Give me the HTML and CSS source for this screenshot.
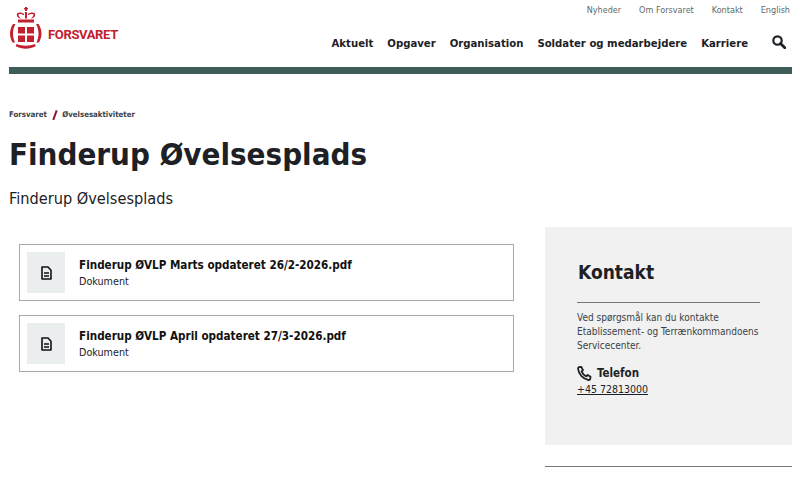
FILE: index.html
```
<!DOCTYPE html>
<html lang="da">
<head>
<meta charset="utf-8">
<title>Finderup Øvelsesplads</title>
<link rel="stylesheet" href="styles.css">
</head>
<body>
<header class="header">
  <div class="header-row">
    <a class="logo" href="#">
      <svg class="logo-mark" width="32" height="42" viewBox="10 7 32 42" aria-hidden="true">
        <g fill="#c1202e">
          <rect x="25" y="7" width="2" height="4"/>
          <rect x="24" y="8" width="4" height="1.300"/>
          <rect x="25" y="12" width="2" height="6.500"/>
          <path d="M20 18.500c-3-1-3.500-3-3-5 2-1.500 5-1 7 .5v1.300c-2-1-4-1.700-5.300-1-.4 1.300.3 2.700 2.300 4.200z"/>
          <path d="M32 18.500c3-1 3.500-3 3-5-2-1.500-5-1-7 .5v1.300c2-1 4-1.700 5.300-1 .4 1.300-.3 2.700-2.300 4.200z"/>
          <rect x="18" y="19.500" width="16" height="3"/>
          <path d="M13 24h2.500c-1.700 3-2.500 6-2.500 9.500s.7 6 2 9h-2.500c-1.600-3-2.500-6-2.500-9s1-6.500 3-9.500z"/>
          <path d="M38.500 24H36c1.700 3 2.500 6 2.500 9.500s-.7 6-2 9H39c1.600-3 2.500-6 2.500-9s-1-6.500-3-9.500z"/>
          <path d="M16.500 44c5.500 2.300 13 2.300 18.500 0l.7 2.300c-6 3.300-14 3.300-20 0z"/>
          <rect x="18" y="27" width="7" height="6.500"/>
          <rect x="27" y="27" width="7" height="6.500"/>
          <rect x="18" y="35.500" width="7" height="6.500"/>
          <rect x="27" y="35.500" width="7" height="6.500"/>
        </g>
      </svg>
      <span class="logo-text">FORSVARET</span>
    </a>
    <div class="nav-col">
      <nav class="top-nav">
        <a href="#">Nyheder</a>
        <a href="#">Om Forsvaret</a>
        <a href="#">Kontakt</a>
        <a href="#">English</a>
      </nav>
      <nav class="main-nav">
        <a href="#">Aktuelt</a>
        <a href="#">Opgaver</a>
        <a href="#">Organisation</a>
        <a href="#">Soldater og medarbejdere</a>
        <a href="#">Karriere</a>
        <svg class="search" width="14" height="14" viewBox="0 0 14 14" aria-hidden="true">
          <circle cx="5.500" cy="5.500" r="4.200" fill="none" stroke="#1d2125" stroke-width="2.200"/>
          <path d="M8.500 8.500l4.300 4.300" stroke="#1d2125" stroke-width="2.800" stroke-linecap="round"/>
        </svg>
      </nav>
    </div>
  </div>
  <div class="bar"></div>
</header>
<main class="main">
  <div class="crumbs"><a href="#">Forsvaret</a><span class="slash"></span><a href="#">Øvelsesaktiviteter</a></div>
  <h1>Finderup Øvelsesplads</h1>
  <p class="lead">Finderup Øvelsesplads</p>
  <div class="columns">
    <section class="docs">
      <a class="doc" href="#">
        <span class="doc-icon">
          <svg width="11" height="14" viewBox="0 0 11 14" aria-hidden="true"><path d="M1 1h6l3 3.200V13H1z" fill="none" stroke="#111" stroke-width="1.600" stroke-linejoin="round"/><path d="M3 7h5M3 10h5" stroke="#111" stroke-width="1.400"/></svg>
        </span>
        <span class="doc-text"><strong>Finderup ØVLP Marts opdateret 26/2-2026.pdf</strong><span>Dokument</span></span>
      </a>
      <a class="doc" href="#">
        <span class="doc-icon">
          <svg width="11" height="14" viewBox="0 0 11 14" aria-hidden="true"><path d="M1 1h6l3 3.200V13H1z" fill="none" stroke="#111" stroke-width="1.600" stroke-linejoin="round"/><path d="M3 7h5M3 10h5" stroke="#111" stroke-width="1.400"/></svg>
        </span>
        <span class="doc-text"><strong>Finderup ØVLP April opdateret 27/3-2026.pdf</strong><span>Dokument</span></span>
      </a>
    </section>
    <aside class="side">
      <div class="contact">
        <h2>Kontakt</h2>
        <p>Ved spørgsmål kan du kontakte Etablissement- og Terrænkommandoens Servicecenter.</p>
        <h3><svg width="15" height="15" viewBox="0 0 15 15" aria-hidden="true"><path d="M2 1.200l2.200-.4 1.800 3.300-1.400 1.300c.8 2 2.600 4 4.700 5l1.400-1.400 2.800 1.800-.3 2.300c-.2.700-1 1-1.700.9C6 13 1.800 8.500 1.100 2.900c-.1-.7.300-1.500.9-1.700z" fill="none" stroke="#1d2125" stroke-width="1.800" stroke-linejoin="round"/></svg>Telefon</h3>
        <a class="phone" href="#">+45 72813000</a>
      </div>
      <div class="side-rule"></div>
    </aside>
  </div>
</main>
</body>
</html>
```
FILE: styles.css
```
* { box-sizing: border-box; }
html, body { margin: 0; padding: 0; }
body {
  background: #fff;
  color: #1d2125;
  font-family: "DejaVu Sans", Verdana, sans-serif;
  font-stretch: condensed;
  height: 482px;
  overflow: hidden;
}
a { color: inherit; text-decoration: none; }
.header { padding: 0 8px 0 9px; }
.header-row { display: flex; justify-content: space-between; height: 67px; }
.logo { display: flex; align-items: flex-start; gap: 6px; padding: 7px 0 0 1px; }
.logo-mark { display: block; }
.logo-text {
  font-family: "Roboto", sans-serif;
  font-stretch: normal;
  font-weight: 700;
  font-size: 13px;
  line-height: 16px;
  letter-spacing: -0.35px;
  color: #c1202e;
  margin-top: 20px;
}
.nav-col { display: flex; flex-direction: column; align-items: flex-end; }
.top-nav { display: flex; gap: 18px; font-size: 9px; line-height: 11px; color: #5d6a6a; padding: 5px 2px 0 0; }
.main-nav { display: flex; align-items: center; gap: 14px; font-size: 11.250px; font-weight: 700; margin-top: 19px; height: 16px; padding-right: 6px; }
.search { margin-left: 10px; margin-top: -3px; }
.bar { height: 7px; background: #3f5d58; }
.main { padding: 35px 8px 0 9px; }
.crumbs { display: flex; align-items: center; font-size: 7.800px; font-weight: 700; line-height: 12px; color: #3a4146; }
.slash { width: 1.500px; height: 10px; background: #8f1436; transform: rotate(20deg); margin: 0 7px 0 7px; }
h1 { margin: 12px 0 0; font-size: 31px; line-height: 42px; font-weight: 700; }
.lead { margin: 13px 0 0; font-size: 16.200px; line-height: 22px; }
.columns { display: flex; justify-content: space-between; margin-top: 17px; }
.docs { width: 495px; margin: 17px 0 0 10px; display: flex; flex-direction: column; gap: 14px; }
.doc { display: flex; align-items: center; gap: 14px; height: 57px; border: 1px solid #a8a8a8; padding: 0 7px; }
.doc-icon { width: 38px; height: 41px; background: #ebeeee; display: flex; align-items: center; justify-content: center; }
.doc-text { display: flex; flex-direction: column; font-size: 10.700px; line-height: 15px; }
.doc-text strong { font-size: 11.600px; line-height: 17px; color: #111; }
.side { width: 247px; }
.contact { background: #f1f1f1; height: 218px; padding: 32px 32px 0; }
.contact h2 { margin: 0 0 0 1px; font-size: 19px; line-height: 26px; }
.contact p { margin: 17px 0 0; border-top: 1px solid #777; padding-top: 8px; font-size: 10px; line-height: 14px; color: #3a4146; }
.contact h3 { display: flex; align-items: center; gap: 5px; margin: 12px 0 0; font-size: 11.500px; line-height: 16px; font-weight: 700; }
.phone { display: block; margin-top: 1px; font-size: 10.500px; line-height: 14px; text-decoration: underline; }
.side-rule { margin-top: 21px; border-top: 1px solid #777; }
```
